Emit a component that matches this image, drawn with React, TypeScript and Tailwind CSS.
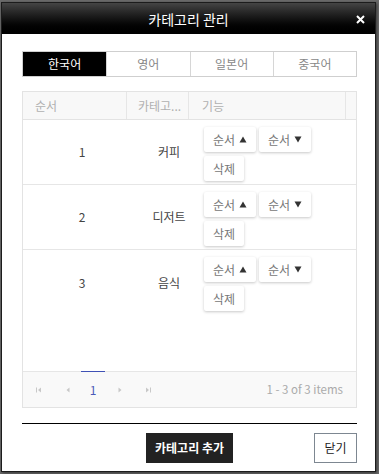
import React from 'react';

const rows = [
  { no: 1, name: '커피' },
  { no: 2, name: '디저트' },
  { no: 3, name: '음식' },
];

const tabs = ['한국어', '영어', '일본어', '중국어'];

const font = { fontFamily: '"Noto Sans CJK KR", "Noto Sans", sans-serif' };

const SmallBtn = ({ children, w }: { children: React.ReactNode; w: string }) => (
  <button
    className={`${w} h-[25px] bg-white rounded-[2px] shadow-[0_1px_3px_rgba(0,0,0,0.22)] text-[12px] text-[#777] flex items-center justify-center gap-[4px]`}
  >
    {children}
  </button>
);

const Tri = ({ up }: { up?: boolean }) => (
  <svg width="8" height="7" viewBox="0 0 8 7">
    <path d={up ? 'M4 0.5 L7.5 6.5 L0.5 6.5 Z' : 'M0.5 0.5 L7.5 0.5 L4 6.5 Z'} fill="#333" />
  </svg>
);

const PagerIcon = ({ kind }: { kind: 'first' | 'prev' | 'next' | 'last' }) => (
  <svg width="8" height="8" viewBox="0 0 8 8" className="text-[#c8c8c8]">
    {kind === 'first' && (
      <>
        <rect x="1" y="1.5" width="1" height="5" fill="currentColor" />
        <path d="M6 1.5 L3 4 L6 6.5 Z" fill="currentColor" />
      </>
    )}
    {kind === 'prev' && <path d="M5.5 1.5 L2.5 4 L5.5 6.5 Z" fill="currentColor" />}
    {kind === 'next' && <path d="M2.5 1.5 L5.5 4 L2.5 6.5 Z" fill="currentColor" />}
    {kind === 'last' && (
      <>
        <path d="M2 1.5 L5 4 L2 6.5 Z" fill="currentColor" />
        <rect x="6" y="1.5" width="1" height="5" fill="currentColor" />
      </>
    )}
  </svg>
);

const App = () => {
  return (
    <div className="w-[379px] h-[474px] bg-[#6b6b6b] pt-[2px] pl-[1px]" style={font}>
      <div className="w-[375px] h-[470px] bg-white border border-[#1c1c1c] shadow-[1px_1px_3px_rgba(0,0,0,0.5)] flex flex-col">
        {/* header */}
        <div className="relative h-[31px] bg-gradient-to-b from-[#454545] to-[#000000] flex items-center justify-center">
          <span className="text-white text-[14px] leading-none">카테고리 관리</span>
          <svg className="absolute right-[10px] top-[12px]" width="9" height="9" viewBox="0 0 9 9">
            <path d="M1 1 L8 8 M8 1 L1 8" stroke="white" strokeWidth="2" />
          </svg>
        </div>

        <div className="ml-[20px] w-[335px] flex flex-col">
          {/* tabs */}
          <div className="mt-[17px] h-[26px] grid grid-cols-4 border border-[#cfcfcf]">
            {tabs.map((t, i) => (
              <div
                key={t}
                className={`flex items-center justify-center text-[12px] ${
                  i === 0 ? 'bg-black text-white' : 'bg-white text-[#888] border-l border-[#d6d6d6]'
                }`}
              >
                {t}
              </div>
            ))}
          </div>

          {/* grid */}
          <div className="mt-[14px] border border-[#e3e3e3] flex flex-col">
            <div className="h-[28px] bg-[#f8f8f8] grid grid-cols-[104px_62px_157px_10px] text-[12px] text-[#b0b0b0] border-b border-[#e3e3e3]">
              <div className="pl-[12px] flex items-center border-r border-[#e6e6e6]">순서</div>
              <div className="pl-[11px] flex items-center border-r border-[#e6e6e6]">카테고...</div>
              <div className="pl-[13px] flex items-center border-r border-[#e6e6e6]">기능</div>
              <div />
            </div>

            <div className="h-[251px]">
              {rows.map((r, i) => (
                <div
                  key={r.no}
                  className={`h-[65px] grid grid-cols-[104px_62px_167px] text-[12px] text-[#444] ${
                    i < rows.length - 1 ? 'border-b border-[#e6e6e6]' : ''
                  }`}
                >
                  <div className="pl-[14px] flex items-center justify-center">{r.no}</div>
                  <div className="pl-[22px] flex items-center justify-center whitespace-nowrap">{r.name}</div>
                  <div className="pl-[15px] pt-[7px] flex flex-col gap-[4px]">
                    <div className="flex gap-[3px]">
                      <SmallBtn w="w-[52px]">
                        순서 <Tri up />
                      </SmallBtn>
                      <SmallBtn w="w-[52px]">
                        순서 <Tri />
                      </SmallBtn>
                    </div>
                    <SmallBtn w="w-[40px]">삭제</SmallBtn>
                  </div>
                </div>
              ))}
            </div>

            {/* pager */}
            <div className="h-[36px] bg-[#f9f9f9] border-t border-[#e6e6e6] flex items-center text-[12px]">
              <div className="flex items-center pl-[12px]">
                <span className="w-[8px] flex justify-center"><PagerIcon kind="first" /></span>
                <span className="w-[8px] ml-[21px] flex justify-center"><PagerIcon kind="prev" /></span>
                <span className="relative ml-[9px] w-[24px] h-[36px] flex items-center justify-center text-[#4a5ab8]">
                  <span className="absolute top-[-1px] left-0 right-0 h-[1px] bg-[#3f51b5]" />
                  1
                </span>
                <span className="w-[8px] ml-[11px] flex justify-center"><PagerIcon kind="next" /></span>
                <span className="w-[8px] ml-[20px] flex justify-center"><PagerIcon kind="last" /></span>
              </div>
              <span className="ml-auto pr-[13px] text-[#aaa] text-[11.5px]">1 - 3 of 3 items</span>
            </div>
          </div>

          {/* footer */}
          <div className="mt-[15px] h-[1px] bg-black" />
          <div className="mt-[9px] grid grid-cols-[1fr_auto_1fr] items-center">
            <div />
            <button className="h-[30px] w-[87px] bg-[#222] text-white text-[12px] font-bold">카테고리 추가</button>
            <div className="flex justify-end">
              <button className="h-[30px] w-[43px] bg-white border border-[#7d8791] text-[12px] text-[#222]">닫기</button>
            </div>
          </div>
        </div>
      </div>
    </div>
  );
};

export default App;
